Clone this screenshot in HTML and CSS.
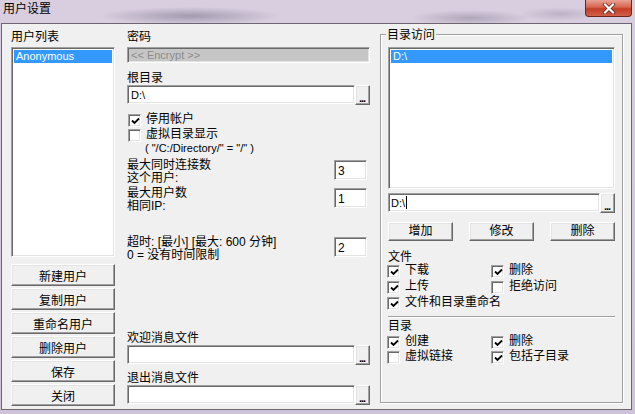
FILE: index.html
```html
<!DOCTYPE html>
<html lang="zh-CN">
<head>
    <meta charset="UTF-8">
    <title>用户设置</title>
    <link rel="stylesheet" href="styles.css">
</head>
<body>
    <div class="window">
        <div class="titlebar">
            <span class="title">用户设置</span>
            <span class="close-btn">
                <svg width="14" height="11" viewBox="0 0 14 11">
                    <path d="M3 1.5 L11 9.5 M11 1.5 L3 9.5" stroke="#5a1a10" stroke-width="3.6" stroke-linecap="square"/>
                    <path d="M3 1.5 L11 9.5 M11 1.5 L3 9.5" stroke="#fff" stroke-width="2.2" stroke-linecap="square"/>
                </svg>
            </span>
        </div>

        <div class="client">
            <div class="users-col">
                <div class="label">用户列表</div>
                <div class="listbox user-list">
                    <div class="item selected">Anonymous</div>
                </div>
                <div class="user-buttons">
                    <button class="btn">新建用户</button>
                    <button class="btn">复制用户</button>
                    <button class="btn">重命名用户</button>
                    <button class="btn">删除用户</button>
                    <button class="btn">保存</button>
                    <button class="btn">关闭</button>
                </div>
            </div>

            <div class="settings-col">
                <div class="label">密码</div>
                <div class="edit disabled">&lt;&lt; Encrypt &gt;&gt;</div>

                <div class="label root-label">根目录</div>
                <div class="path-row">
                    <div class="edit">D:\</div>
                    <button class="browse">...</button>
                </div>

                <div class="checks">
                    <div class="check"><span class="box"><svg width="9" height="9" viewBox="0 0 9 9"><path d="M1 3.5 L3.5 6 L8 1.5" stroke="#000" stroke-width="1.8" fill="none"/></svg></span>停用帐户</div>
                    <div class="check"><span class="box"></span>虚拟目录显示</div>
                </div>
                <div class="note">( "/C:/Directory/" = "/" )</div>

                <div class="limit-row first">
                    <div class="limit-text">最大同时连接数<br>这个用户:</div>
                    <div class="edit num">3</div>
                </div>
                <div class="limit-row second">
                    <div class="limit-text">最大用户数<br>相同IP:</div>
                    <div class="edit num">1</div>
                </div>
                <div class="limit-row timeout">
                    <div class="limit-text">超时: [最小] [最大: 600 分钟]<br>0 = 没有时间限制</div>
                    <div class="edit num">2</div>
                </div>

                <div class="message-files">
                    <div class="label file-label">欢迎消息文件</div>
                    <div class="path-row">
                        <div class="edit"></div>
                        <button class="browse">...</button>
                    </div>
                    <div class="label file-label">退出消息文件</div>
                    <div class="path-row">
                        <div class="edit"></div>
                        <button class="browse">...</button>
                    </div>
                </div>
            </div>

            <div class="group">
                <div class="group-title">目录访问</div>
                <div class="listbox dir-list">
                    <div class="item selected">D:\</div>
                </div>
                <div class="path-row dir-path">
                    <div class="edit">D:\<span class="caret"></span></div>
                    <button class="browse">...</button>
                </div>
                <div class="dir-buttons">
                    <button class="btn">增加</button>
                    <button class="btn">修改</button>
                    <button class="btn">删除</button>
                </div>

                <div class="section-label">文件</div>
                <div class="check-grid">
                    <div class="check"><span class="box"><svg width="9" height="9" viewBox="0 0 9 9"><path d="M1 3.5 L3.5 6 L8 1.5" stroke="#000" stroke-width="1.8" fill="none"/></svg></span>下载</div>
                    <div class="check"><span class="box"><svg width="9" height="9" viewBox="0 0 9 9"><path d="M1 3.5 L3.5 6 L8 1.5" stroke="#000" stroke-width="1.8" fill="none"/></svg></span>删除</div>
                    <div class="check"><span class="box"><svg width="9" height="9" viewBox="0 0 9 9"><path d="M1 3.5 L3.5 6 L8 1.5" stroke="#000" stroke-width="1.8" fill="none"/></svg></span>上传</div>
                    <div class="check"><span class="box"></span>拒绝访问</div>
                    <div class="check wide"><span class="box"><svg width="9" height="9" viewBox="0 0 9 9"><path d="M1 3.5 L3.5 6 L8 1.5" stroke="#000" stroke-width="1.8" fill="none"/></svg></span>文件和目录重命名</div>
                </div>

                <div class="separator"></div>

                <div class="section-label dir-label">目录</div>
                <div class="check-grid">
                    <div class="check"><span class="box"><svg width="9" height="9" viewBox="0 0 9 9"><path d="M1 3.5 L3.5 6 L8 1.5" stroke="#000" stroke-width="1.8" fill="none"/></svg></span>创建</div>
                    <div class="check"><span class="box"><svg width="9" height="9" viewBox="0 0 9 9"><path d="M1 3.5 L3.5 6 L8 1.5" stroke="#000" stroke-width="1.8" fill="none"/></svg></span>删除</div>
                    <div class="check"><span class="box"></span>虚拟链接</div>
                    <div class="check"><span class="box"><svg width="9" height="9" viewBox="0 0 9 9"><path d="M1 3.5 L3.5 6 L8 1.5" stroke="#000" stroke-width="1.8" fill="none"/></svg></span>包括子目录</div>
                </div>
            </div>
        </div>
    </div>
</body>
</html>
```

FILE: styles.css
```css
* {
    box-sizing: border-box;
}

body {
    margin: 0;
    width: 635px;
    height: 414px;
    overflow: hidden;
    font-family: "Liberation Sans", "Noto Sans CJK SC", sans-serif;
    font-size: 12px;
    color: #000;
    background: #d3c7da;
}

.window {
    height: 414px;
    display: flex;
    flex-direction: column;
    background:
        radial-gradient(ellipse 90px 9px at 190px 16px, rgba(120, 112, 132, 0.55), transparent),
        radial-gradient(ellipse 60px 8px at 470px 18px, rgba(130, 120, 140, 0.45), transparent),
        radial-gradient(ellipse 40px 7px at 560px 14px, rgba(140, 130, 150, 0.35), transparent),
        linear-gradient(#d8cee0, #cfc3d8);
}

/* title bar */
.titlebar {
    height: 23px;
    display: flex;
    align-items: flex-start;
    padding-left: 3px;
}

.title {
    font-size: 12px;
    line-height: 14px;
    margin-top: 2px;
}

.close-btn {
    margin-left: auto;
    margin-right: 3px;
    width: 47px;
    height: 17px;
    display: flex;
    align-items: center;
    justify-content: center;
    border: 1px solid #6e2418;
    border-top: none;
    border-radius: 0 0 4px 4px;
    background: linear-gradient(#e9a394, #d7644f 45%, #c23d26 55%, #d2604a);
}

/* client area */
.client {
    margin: 0 3px 4px 1px;
    height: 387px;
    border: 1px solid #6d6672;
    background: #f0f0f0;
    display: flex;
    padding: 6px 0 0 9px;
}

.label {
    height: 17px;
    line-height: 14px;
}

.edit {
    height: 19px;
    background: #fff;
    border: 1px solid;
    border-color: #a0a0a0 #fff #fff #a0a0a0;
    box-shadow: inset 1px 1px 0 #696969, inset -1px -1px 0 #e3e3e3;
    padding: 2px 0 0 3px;
    font-size: 11px;
    line-height: 14px;
    white-space: nowrap;
}

.edit.disabled {
    height: 16px;
    background: #c6c6c6;
    color: #8c8c8c;
    padding-top: 1px;
    line-height: 13px;
}

.btn {
    display: block;
    margin: 0;
    padding: 0;
    height: 22px;
    font: inherit;
    color: #000;
    background: #f0f0f0;
    border: 1px solid;
    border-color: #fff #696969 #696969 #fff;
    box-shadow: inset -1px -1px 0 #a0a0a0, inset 1px 1px 0 #e3e3e3;
}

.browse {
    width: 15px;
    height: 20px;
    margin: 0;
    padding: 5px 0 0;
    font: bold 11px "Liberation Sans", sans-serif;
    letter-spacing: -1px;
    text-indent: -1px;
    color: #000;
    background: #f0f0f0;
    border: 1px solid;
    border-color: #fff #696969 #696969 #fff;
    box-shadow: inset -1px -1px 0 #a0a0a0, inset 1px 1px 0 #e3e3e3;
}

.listbox {
    background: #fff;
    border: 1px solid;
    border-color: #a0a0a0 #fff #fff #a0a0a0;
    box-shadow: inset 1px 1px 0 #696969, inset -1px -1px 0 #e3e3e3;
    padding: 2px;
}

.item {
    height: 13px;
    line-height: 13px;
    font-size: 11px;
    padding-left: 2px;
}

.item.selected {
    background: #3399ff;
    color: #fff;
}

/* left column */
.users-col {
    width: 104px;
    display: flex;
    flex-direction: column;
}

.user-list {
    height: 210px;
}

.user-buttons {
    margin-top: 7px;
    display: flex;
    flex-direction: column;
    gap: 2px;
}

/* middle column */
.settings-col {
    width: 243px;
    margin-left: 12px;
    display: flex;
    flex-direction: column;
    padding-bottom: 4px;
}

.root-label {
    margin-top: 8px;
    height: 14px;
}

.path-row {
    display: flex;
    align-items: flex-start;
    height: 20px;
}

.path-row .edit {
    flex: 1;
}

.checks {
    margin-top: 7px;
}

.check {
    height: 15px;
    display: flex;
    align-items: flex-start;
    line-height: 15px;
    white-space: nowrap;
}

.box {
    width: 13px;
    height: 13px;
    margin: 2px 5px 0 1px;
    background: #fff;
    border: 1px solid;
    border-color: #a0a0a0 #fff #fff #a0a0a0;
    box-shadow: inset 1px 1px 0 #696969, inset -1px -1px 0 #e3e3e3;
    display: flex;
    align-items: center;
    justify-content: center;
    flex-shrink: 0;
}

.box svg {
    margin: 1px 0 0 1px;
}

.note {
    margin-left: 18px;
    font-size: 11px;
    line-height: 13px;
    height: 13px;
}

.limit-row {
    display: flex;
    justify-content: space-between;
    align-items: flex-start;
}

.limit-row.first {
    margin-top: 4px;
}

.limit-row.second {
    margin-top: 2px;
}

.limit-row.timeout {
    margin-top: 23px;
}

.limit-text {
    line-height: 13px;
}

.edit.num {
    width: 33px;
    height: 20px;
    margin: 1px 3px 0 0;
    font-size: 12px;
    padding-top: 3px;
}

.message-files {
    margin-top: auto;
}

.file-label {
    height: 14px;
}

.file-label + .path-row + .file-label {
    margin-top: 6px;
}

/* right group box */
.group {
    width: 243px;
    height: 369px;
    margin: 4px 0 0 10px;
    border: 1px solid #a0a0a0;
    box-shadow: 1px 1px 0 #fff, inset 1px 1px 0 #fff;
    padding: 0 7px;
}

.group-title {
    width: fit-content;
    margin: -6px 0 0 -2px;
    padding: 0 1px;
    line-height: 13px;
    background: #f0f0f0;
}

.dir-list {
    margin-top: 5px;
    height: 142px;
}

.dir-path {
    margin-top: 4px;
}

.dir-path .edit {
    padding-left: 2px;
}

.caret {
    display: inline-block;
    width: 1px;
    height: 13px;
    margin-left: 1px;
    vertical-align: -2px;
    background: #000;
}

.dir-buttons {
    margin-top: 9px;
    display: flex;
    justify-content: space-between;
}

.dir-buttons .btn {
    width: 65px;
    height: 19px;
    line-height: 15px;
}

.section-label {
    margin-top: 10px;
    height: 12px;
    line-height: 13px;
}

.check-grid {
    display: grid;
    grid-template-columns: 104px 1fr;
    grid-auto-rows: 16px;
}

.check-grid .box {
    margin-left: -1px;
}

.check.wide {
    grid-column: 1 / 3;
}

.separator {
    margin-top: 5px;
    height: 2px;
    border-top: 1px solid #a0a0a0;
    border-bottom: 1px solid #fff;
}

.dir-label {
    margin-top: 2px;
    height: 14px;
}

.dir-label + .check-grid {
    grid-auto-rows: 15px;
}
```
